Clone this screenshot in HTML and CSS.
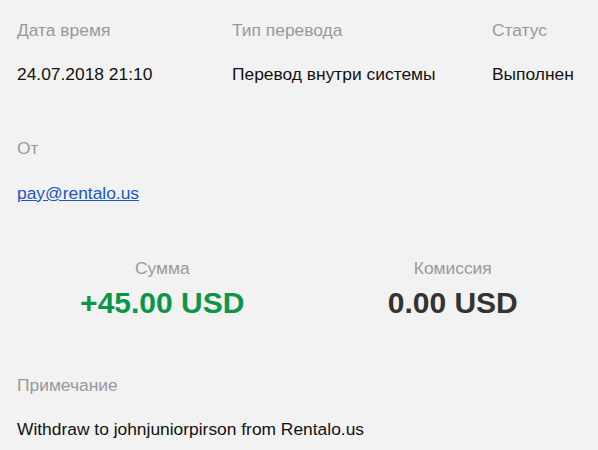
FILE: index.html
```html
<!DOCTYPE html>
<html lang="ru">
<head>
    <meta charset="UTF-8">
    <meta name="viewport" content="width=device-width, initial-scale=1.0">
    <title>Операция</title>
    <link rel="stylesheet" href="styles.css">
</head>
<body>
    <div class="details">
        <div class="info-row">
            <div class="field">
                <div class="label">Дата время</div>
                <div class="value">24.07.2018 21:10</div>
            </div>
            <div class="field">
                <div class="label">Тип перевода</div>
                <div class="value">Перевод внутри системы</div>
            </div>
            <div class="field">
                <div class="label">Статус</div>
                <div class="value">Выполнен</div>
            </div>
        </div>

        <div class="field from">
            <div class="label">От</div>
            <div class="value"><a href="#">pay@rentalo.us</a></div>
        </div>

        <div class="sums">
            <div class="sum">
                <div class="label">Сумма</div>
                <div class="amount plus">+45.00 USD</div>
            </div>
            <div class="sum">
                <div class="label">Комиссия</div>
                <div class="amount">0.00 USD</div>
            </div>
        </div>

        <div class="field note">
            <div class="label">Примечание</div>
            <div class="value">Withdraw to johnjuniorpirson from Rentalo.us</div>
        </div>
    </div>
</body>
</html>
```

FILE: styles.css
```css
body {
    margin: 0;
    background-color: #f2f2f2;
    font-family: "Liberation Sans", Arial, sans-serif;
    color: #111;
}

.details {
    padding: 19px 0 0 17px;
}

.info-row {
    display: grid;
    grid-template-columns: 215px 260px auto;
}

.label {
    font-size: 17.4px;
    line-height: 22px;
    color: #999;
}

.value {
    font-size: 17.4px;
    line-height: 22px;
    margin-top: 22px;
}

.value a {
    color: #1a56c4;
}

.from {
    margin-top: 52px;
}

.from .value {
    margin-top: 23px;
}

.sums {
    display: grid;
    grid-template-columns: 1fr 1fr;
    margin-top: 53px;
    text-align: center;
}

.amount {
    font-size: 30px;
    font-weight: bold;
    line-height: 34px;
    color: #333;
    margin-top: 7px;
}

.amount.plus {
    color: #0c9447;
}

.note {
    margin-top: 54px;
}

.note .value {
    margin-top: 22px;
}
```
